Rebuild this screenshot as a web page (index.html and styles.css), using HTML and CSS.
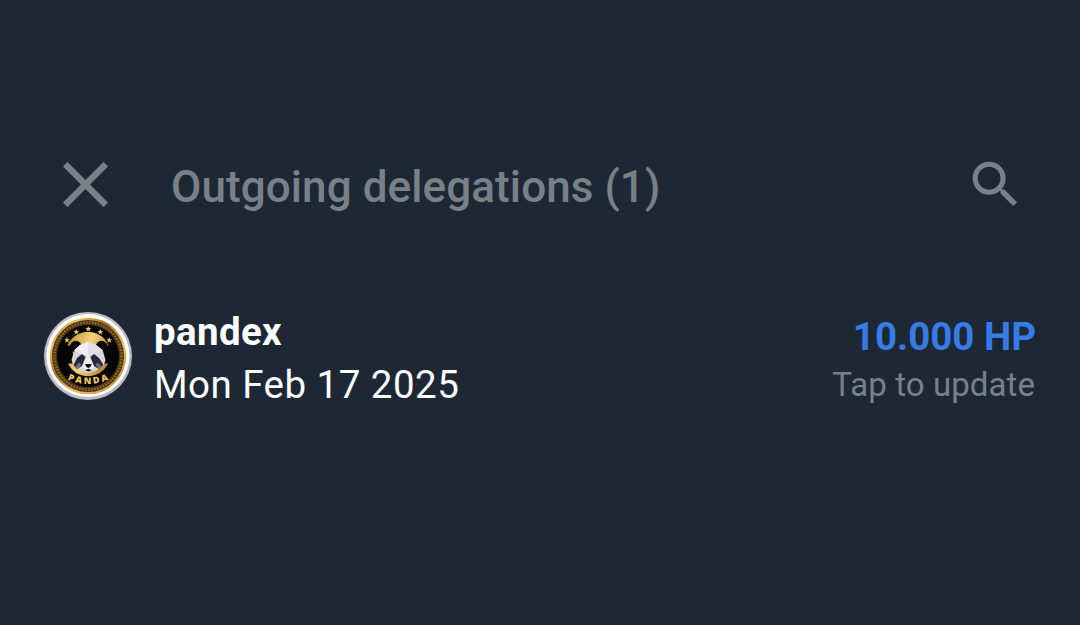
FILE: index.html
```html
<!DOCTYPE html>
<html lang="en">
<head>
    <meta charset="UTF-8">
    <meta name="viewport" content="width=device-width, initial-scale=1.0">
    <title>Outgoing delegations</title>
    <link rel="stylesheet" href="styles.css">
</head>
<body>
    <header class="header">
        <svg class="icon-close" viewBox="0 0 45 45">
            <path d="M2.2 2.2L42.8 42.8M42.8 2.2L2.2 42.8"/>
        </svg>
        <h1 class="title">Outgoing delegations (1)</h1>
        <svg class="icon-search" viewBox="0 0 24 24">
            <path d="M15.5 14h-.79l-.28-.27C15.41 12.59 16 11.11 16 9.5 16 5.91 13.09 3 9.5 3S3 5.91 3 9.5 5.91 16 9.5 16c1.61 0 3.09-.59 4.23-1.57l.27.28v.79l5 4.99L20.49 19l-4.99-5zm-6 0C7.01 14 5 11.99 5 9.5S7.01 5 9.5 5 14 7.01 14 9.5 11.99 14 9.5 14z"/>
        </svg>
    </header>

    <ul class="list">
        <li class="row">
            <svg class="avatar" viewBox="6 6 88 88">
                <defs>
                    <linearGradient id="gold" x1="0" y1="0" x2="1" y2="1">
                        <stop offset="0" stop-color="#8a5a1c"/>
                        <stop offset="0.2" stop-color="#f0bd60"/>
                        <stop offset="0.4" stop-color="#a87028"/>
                        <stop offset="0.65" stop-color="#f0c068"/>
                        <stop offset="1" stop-color="#b87828"/>
                    </linearGradient>
                    <linearGradient id="disc" x1="0" y1="0" x2="1" y2="0.4">
                        <stop offset="0" stop-color="#b8872e"/>
                        <stop offset="0.55" stop-color="#f3d37a"/>
                        <stop offset="1" stop-color="#c08a30"/>
                    </linearGradient>
                    <path id="arc" d="M29.5 73.6Q50 82.5 71.5 73.2"/>
                    <path id="star" d="M0-2.9L.8-.9 2.8-.9 1.2.4 1.8 2.5 0 1.3-1.8 2.5-1.2.4-2.8-.9-.8-.9z"/>
                </defs>
                <circle cx="50" cy="50" r="44" fill="#b9bcc2"/>
                <circle cx="50" cy="49.6" r="41.5" fill="#ffffff"/>
                <!-- coin rim -->
                <circle cx="50" cy="50" r="38.3" fill="url(#gold)"/>
                <circle cx="50" cy="50" r="33.6" fill="none" stroke="#4a3215" stroke-width="4.8"/>
                <circle cx="50" cy="50" r="33.6" fill="none" stroke="#8d6930" stroke-width="2.6" stroke-dasharray="1.7 1.3"/>
                <circle cx="50" cy="50" r="31.3" fill="#050505"/>
                <circle cx="50" cy="48" r="22.2" fill="url(#disc)"/>
                <path d="M26 39.5H34L36 57.5H26zM74 39.5H66L64 57.5H74z" fill="#050505"/>
                <g fill="#f3cb68">
                    <use href="#star" x="29" y="34.2"/>
                    <use href="#star" x="38.3" y="26"/>
                    <use href="#star" x="50.3" y="23"/>
                    <use href="#star" x="62.3" y="26"/>
                    <use href="#star" x="71.2" y="34.2"/>
                </g>
                <!-- panda head -->
                <circle cx="37.8" cy="40.6" r="5.9" fill="#0b0b0d"/>
                <circle cx="63.6" cy="40.6" r="5.9" fill="#0b0b0d"/>
                <path d="M42 39L50 36 58 39 64.5 44 67.5 54 65.5 60 57 65 50 67 43 65 35.5 60 33.5 54 36.5 44z" fill="#d8d7dc"/>
                <path d="M42 39L50 36 50 50 43 48 36.5 44z" fill="#f1eff1"/>
                <path d="M50 36L58 39 64.5 44 57 48 50 50z" fill="#e4e0e5"/>
                <path d="M35.5 59L39 52 44 48 47.5 51 46 55 44 60 39 63zM65.5 59L61 52 56 48 52.5 51 54 55 56 60 61 63z" fill="#262a37"/>
                <path d="M37 61L41 56.5 43.5 58.5 40 63zM64 61L60 56.5 57.5 58.5 61 63z" fill="#6c7180"/>
                <path d="M46.5 55L50 49 53.5 55 56 61 50 66 44 61z" fill="#eeeeef"/>
                <path d="M47 58H53.8L52.3 61 50.4 62 48.4 61zM47 64.3L50.4 62.7 54 64.3 50.4 65.5z" fill="#111216"/>
                <text class="coin-text"><textPath href="#arc" textLength="42">PANDA</textPath></text>
            </svg>
            <div class="info">
                <span class="name">pandex</span>
                <span class="date">Mon Feb 17 2025</span>
            </div>
            <div class="amount">
                <span class="value">10.000 HP</span>
                <span class="hint">Tap to update</span>
            </div>
        </li>
    </ul>
</body>
</html>
```

FILE: styles.css
```css
* {
    box-sizing: border-box;
    margin: 0;
    padding: 0;
}

body {
    height: 625px;
    padding-top: 154px;
    overflow: hidden;
    background: #1e2835;
    color: #fcfcfc;
    font-family: Roboto, sans-serif;
}

/* header */
.header {
    display: flex;
    align-items: center;
    height: 61px;
    padding: 0 54px 0 63px;
}

.icon-close {
    width: 45px;
    height: 45px;
    fill: none;
    stroke: #788187;
    stroke-width: 6.4px;
}

.title {
    flex: 1;
    padding: 5px 0 0 63px;
    color: #788187;
    font-size: 44px;
    font-weight: 500;
    line-height: 52px;
    letter-spacing: 0.09px;
    white-space: nowrap;
}

.icon-search {
    width: 61px;
    height: 61px;
    fill: #788187;
}

/* delegation list */
.list {
    padding: 90px 44px 0;
    list-style: none;
}

.row {
    display: flex;
    align-items: flex-start;
}

.avatar {
    width: 88px;
    height: 88px;
    margin-top: 7px;
}

.info,
.amount {
    display: flex;
    flex-direction: column;
    white-space: nowrap;
}

.info {
    flex: 1;
    padding: 0 0 0 22px;
    font-size: 38.5px;
    line-height: 53px;
}

.name {
    font-weight: 700;
    letter-spacing: 0.35px;
}

.date {
    letter-spacing: 0.47px;
}

.amount {
    padding-top: 5px;
    align-items: flex-end;
}

.value {
    color: #357ce6;
    font-size: 38.5px;
    font-weight: 700;
    line-height: 53px;
}

.hint {
    margin-right: 1px;
    color: #788187;
    font-size: 33px;
    line-height: 44px;
    letter-spacing: 0.08px;
}

.coin-text {
    fill: #f5c75f;
    font-family: "Open Sans", sans-serif;
    font-size: 9px;
    font-weight: 800;
}
```
